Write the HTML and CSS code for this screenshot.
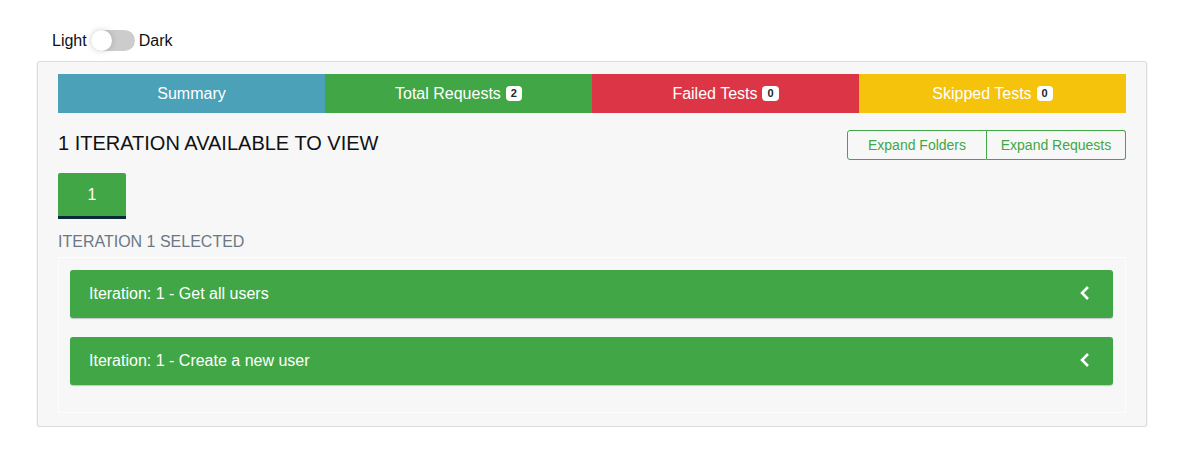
FILE: index.html
```html
<!DOCTYPE html>
<html lang="en">
<head>
<meta charset="utf-8">
<title>Report</title>
<link rel="stylesheet" href="styles.css">
</head>
<body>
<div class="page">
  <div class="theme-row">
    <span class="theme-label">Light</span>
    <span class="switch"><span class="knob"></span></span>
    <span class="theme-label">Dark</span>
  </div>
  <div class="card">
    <div class="tabs">
      <div class="tab tab-summary">Summary</div>
      <div class="tab tab-total">Total Requests <span class="badge">2</span></div>
      <div class="tab tab-failed">Failed Tests <span class="badge">0</span></div>
      <div class="tab tab-skipped">Skipped Tests <span class="badge">0</span></div>
    </div>
    <div class="head-row">
      <h2 class="heading">1 ITERATION AVAILABLE TO VIEW</h2>
      <div class="btn-group">
        <button class="btn">Expand Folders</button>
        <button class="btn">Expand Requests</button>
      </div>
    </div>
    <div class="iter-tabs">
      <button class="iter-tab">1</button>
    </div>
    <div class="selected">ITERATION 1 SELECTED</div>
    <div class="panel">
      <div class="row">
        <span>Iteration: 1 - Get all users</span>
        <svg class="chev" width="12" height="16" viewBox="0 0 12 16"><polyline points="9,2 3,8 9,14" fill="none" stroke="#fff" stroke-width="2.6"/></svg>
      </div>
      <div class="row">
        <span>Iteration: 1 - Create a new user</span>
        <svg class="chev" width="12" height="16" viewBox="0 0 12 16"><polyline points="9,2 3,8 9,14" fill="none" stroke="#fff" stroke-width="2.6"/></svg>
      </div>
    </div>
  </div>
</div>
</body>
</html>
```
FILE: styles.css
```css
* { box-sizing: border-box; }
html, body { margin: 0; padding: 0; background: #fff; }
body {
  font-family: "Liberation Sans", Arial, sans-serif;
  color: #212529;
  font-size: 16px;
}
.page {
  padding: 30px 35px 0 37px;
}
.theme-row {
  display: flex;
  align-items: center;
  height: 21px;
  padding-left: 15px;
  gap: 4px;
}
.theme-label { font-size: 16px; line-height: 21px; color: #111; }
.switch {
  position: relative;
  display: inline-block;
  width: 44px;
  height: 21px;
  border-radius: 11px;
  background: #cccccc;
}
.knob {
  position: absolute;
  left: 0;
  top: 0;
  width: 21px;
  height: 21px;
  border-radius: 50%;
  background: #fff;
  box-shadow: 0 0 6px rgba(0,0,0,0.18);
}
.card {
  margin-top: 10px;
  width: 1110px;
  height: 366px;
  border: 1px solid #dcdcdc;
  border-radius: 3px;
  background: #f7f7f7;
  box-shadow: 0 1px 2px rgba(0,0,0,0.12);
  padding: 12px 20px 0 20px;
}
.tabs {
  display: grid;
  grid-template-columns: repeat(4, 1fr);
  height: 39px;
}
.tab {
  display: flex;
  align-items: center;
  justify-content: center;
  color: #fff;
  font-size: 16px;
}
.tab-summary { background: #4aa1b8; }
.tab-total { background: #41a746; }
.tab-failed { background: #dc3545; }
.tab-skipped { background: #f5c20c; }
.badge {
  display: inline-block;
  margin-left: 5px;
  background: #fff;
  color: #212529;
  font-size: 11px;
  font-weight: 700;
  line-height: 11px;
  padding: 2px 5px;
  border-radius: 4px;
}
.head-row {
  display: flex;
  justify-content: space-between;
  align-items: flex-start;
  margin-top: 17px;
}
.heading {
  margin: 1px 0 0 0;
  font-size: 20px;
  font-weight: 400;
  line-height: 24px;
  color: #111;
}
.btn-group { display: flex; }
.btn {
  height: 30px;
  font-family: "Liberation Sans", Arial, sans-serif;
  font-size: 14px;
  color: #41a746;
  background: transparent;
  border: 1px solid #41a746;
  padding: 0;
  margin: 0;
  white-space: nowrap;
  cursor: pointer;
}
.btn:first-child { border-radius: 3px 0 0 3px; width: 140px; }
.btn:last-child { border-radius: 0 3px 3px 0; border-left: 0; width: 139px; }
.iter-tabs {
  margin-top: 13px;
  display: flex;
}
.iter-tab {
  width: 68px;
  height: 46px;
  background: #41a746;
  border: 0;
  border-bottom: 3px solid #0b2a38;
  color: #fff;
  font-family: "Liberation Sans", Arial, sans-serif;
  font-size: 16px;
  padding: 0;
  border-radius: 2px 2px 0 0;
}
.selected {
  margin-top: 13px;
  font-size: 16px;
  line-height: 19px;
  color: #6c7784;
}
.panel {
  margin-top: 6px;
  border: 1px solid #fdfdfd;
  padding: 12px 12px 8px 11px;
}
.row {
  display: flex;
  align-items: center;
  justify-content: space-between;
  height: 48px;
  margin-bottom: 19px;
  padding: 0 22px 0 19px;
  background: #41a746;
  border-radius: 3px;
  box-shadow: 0 1px 1px rgba(0,0,0,0.2);
  color: #fff;
  font-size: 16px;
}
.chev { display: block; margin-top: -2px; }
```
